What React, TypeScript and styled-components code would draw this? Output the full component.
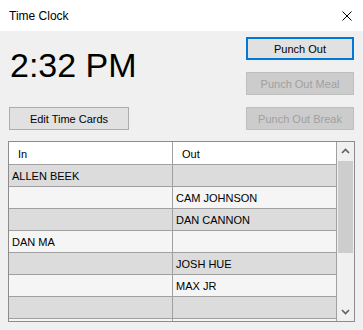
import React from "react";
import styled, { createGlobalStyle } from "styled-components";

const GlobalStyle = createGlobalStyle`
  html, body { margin: 0; padding: 0; background: #f0f0f0; }
  body { font-family: "Liberation Sans", Arial, sans-serif; }
  * { box-sizing: border-box; }
`;

const Window = styled.div`
  width: 363px;
  height: 330px;
  display: flex;
  flex-direction: column;
  background: #f0f0f0;
  overflow: hidden;
`;

const TitleBar = styled.div`
  height: 31px;
  flex-shrink: 0;
  background: #ffffff;
  display: flex;
  align-items: center;
  justify-content: space-between;
  padding: 0 11px 0 9px;
  font-size: 12px;
  color: #000;
`;

const Body = styled.div`
  flex: 1;
  display: flex;
  flex-direction: column;
  padding: 6px 8px 8px 8px;
`;

const TopSection = styled.div`
  display: flex;
  justify-content: space-between;
  height: 93px;
`;

const LeftCol = styled.div`
  display: flex;
  flex-direction: column;
  justify-content: space-between;
  padding-left: 1px;
`;

const RightCol = styled.div`
  display: flex;
  flex-direction: column;
  gap: 12px;
  padding-right: 1px;
`;

const TimeText = styled.div`
  font-size: 34px;
  line-height: 34px;
  margin-top: 11px;
  padding-left: 1px;
  color: #000;
`;

const Button = styled.button<{ $width: number; $primary?: boolean }>`
  width: ${(p) => p.$width}px;
  height: 23px;
  margin: 0;
  padding: 0;
  font-family: "Liberation Sans", Arial, sans-serif;
  font-size: 11px;
  color: #000;
  background: #e1e1e1;
  border: ${(p) => (p.$primary ? "2px solid #0078d7" : "1px solid #adadad")};
  display: flex;
  align-items: center;
  justify-content: center;

  &:disabled {
    background: #cccccc;
    border: 1px solid #bfbfbf;
    color: #a0a0a0;
  }
`;

const Grid = styled.div`
  margin-top: 11px;
  height: 181px;
  border: 1px solid #8c8c8c;
  display: flex;
  background: #f0f0f0;
  overflow: hidden;
`;

const Table = styled.div`
  width: 328px;
  display: flex;
  flex-direction: column;
  overflow: hidden;
`;

const Row = styled.div`
  display: grid;
  grid-template-columns: 164px 164px;
  flex-shrink: 0;
`;

const HeaderCell = styled.div`
  height: 23px;
  background: #ffffff;
  border-right: 1px solid #a0a0a0;
  border-bottom: 1px solid #a0a0a0;
  padding-left: 9px;
  padding-top: 2px;
  display: flex;
  align-items: center;
  font-size: 11px;
  color: #000;
`;

const Cell = styled.div<{ $shade: boolean }>`
  height: 22px;
  background: ${(p) => (p.$shade ? "#dcdcdc" : "#f5f5f5")};
  border-right: 1px solid #a0a0a0;
  border-bottom: 1px solid #a0a0a0;
  padding-left: 3px;
  display: flex;
  align-items: center;
  font-size: 11px;
  color: #000;
  white-space: nowrap;
`;

const ScrollBar = styled.div`
  width: 17px;
  display: flex;
  flex-direction: column;
  background: #f0f0f0;
`;

const ScrollButton = styled.div`
  height: 18px;
  flex-shrink: 0;
  display: flex;
  align-items: center;
  justify-content: center;
`;

const Thumb = styled.div`
  height: 92px;
  margin: 1px 1px 0 1px;
  background: #cdcdcd;
`;

const Spacer = styled.div`
  flex: 1;
`;

const rows: [string, string][] = [
  ["ALLEN BEEK", ""],
  ["", "CAM JOHNSON"],
  ["", "DAN CANNON"],
  ["DAN MA", ""],
  ["", "JOSH HUE"],
  ["", "MAX JR"],
  ["", ""],
  ["", ""],
];

const Chevron = ({ up }: { up: boolean }) => (
  <svg width="9" height="6" viewBox="0 0 9 6">
    <polyline
      points={up ? "1,5 4.5,1.5 8,5" : "1,1 4.5,4.5 8,1"}
      fill="none"
      stroke="#606060"
      strokeWidth="1.6"
    />
  </svg>
);

export default function App() {
  return (
    <>
      <GlobalStyle />
      <Window>
        <TitleBar>
          <span>Time Clock</span>
          <svg width="10" height="10" viewBox="0 0 10 10">
            <path d="M0.5 0.5 L9.5 9.5 M9.5 0.5 L0.5 9.5" stroke="#000" strokeWidth="1" />
          </svg>
        </TitleBar>
        <Body>
          <TopSection>
            <LeftCol>
              <TimeText>2:32 PM</TimeText>
              <Button $width={120}>Edit Time Cards</Button>
            </LeftCol>
            <RightCol>
              <Button $width={108} $primary>
                Punch Out
              </Button>
              <Button $width={108} disabled>
                Punch Out Meal
              </Button>
              <Button $width={108} disabled>
                Punch Out Break
              </Button>
            </RightCol>
          </TopSection>
          <Grid>
            <Table>
              <Row>
                <HeaderCell>In</HeaderCell>
                <HeaderCell>Out</HeaderCell>
              </Row>
              {rows.map(([a, b], i) => (
                <Row key={i}>
                  <Cell $shade={i % 2 === 0}>{a}</Cell>
                  <Cell $shade={i % 2 === 0}>{b}</Cell>
                </Row>
              ))}
            </Table>
            <ScrollBar>
              <ScrollButton>
                <Chevron up />
              </ScrollButton>
              <Thumb />
              <Spacer />
              <ScrollButton>
                <Chevron up={false} />
              </ScrollButton>
            </ScrollBar>
          </Grid>
        </Body>
      </Window>
    </>
  );
}
